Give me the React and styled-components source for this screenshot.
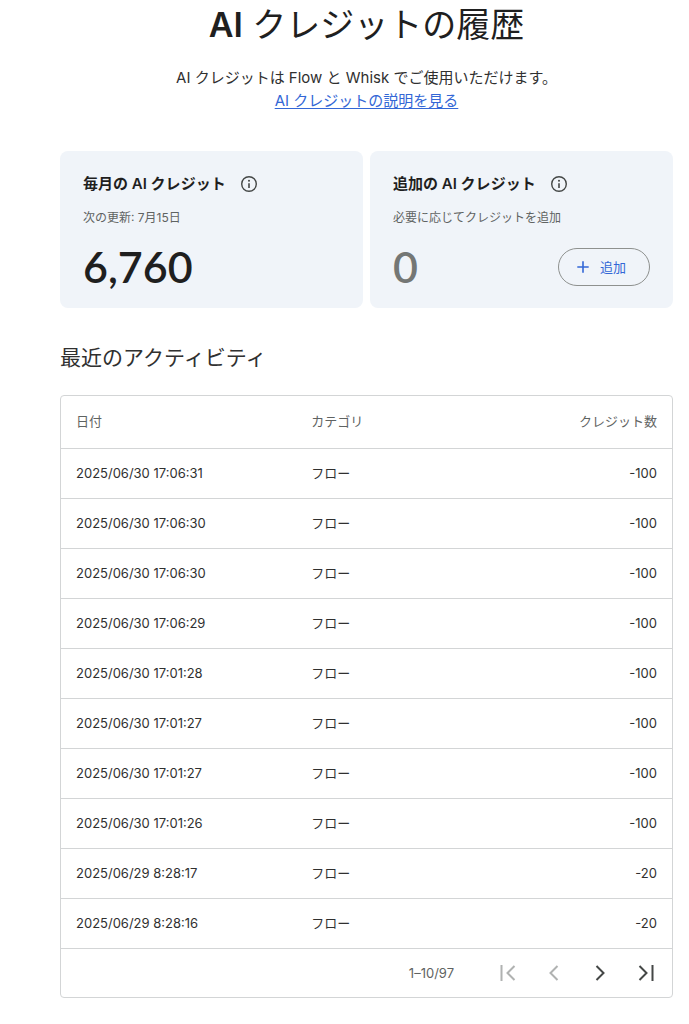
import React from "react";
import styled, { createGlobalStyle } from "styled-components";

const cjk = '"Noto Sans CJK JP", sans-serif';
const textFont = `Inter, ${cjk}`;
const numberFont = `Lato, ${cjk}`;

const GlobalStyle = createGlobalStyle`
  *, *::before, *::after { box-sizing: border-box; }
  body {
    margin: 0;
    background: #fff;
    color: #1f1f1f;
    font-family: ${textFont};
  }
`;

const Page = styled.main`
  padding: 0 16px 24px 60px;
`;

const Header = styled.header`
  display: flex;
  flex-direction: column;
  align-items: center;
  text-align: center;
`;

const Title = styled.h1`
  margin: 0 0 16px;
  font-size: 34px;
  line-height: 50px;
  font-weight: 400;
`;

const Latin = styled.span`
  font-weight: 600;
`;

const Intro = styled.p`
  margin: 0;
  font-size: 15px;
  line-height: 23px;
  color: #303030;
`;

const Link = styled.a`
  color: #3367d6;
  font-size: 15px;
  line-height: 23px;
  text-decoration: underline;
  text-underline-offset: 2px;
`;

const Cards = styled.section`
  display: grid;
  grid-template-columns: 1fr 1fr;
  gap: 7px;
  margin-top: 39px;
`;

const Card = styled.article`
  padding: 21px 23px;
  border-radius: 8px;
  background: #f0f4f9;
`;

const CardHeading = styled.div`
  display: flex;
  align-items: center;
  gap: 14px;
`;

const CardTitle = styled.h2`
  margin: 0;
  font-size: 15px;
  line-height: 24px;
  font-weight: 600;
`;

const InfoButton = styled.button`
  display: flex;
  padding: 0;
  border: 0;
  background: none;
  color: #444746;
  cursor: pointer;
`;

const CardNote = styled.p`
  margin: 12px 0 0;
  font-size: 12px;
  line-height: 20px;
  color: #5f6362;
`;

const CardFooter = styled.div`
  display: flex;
  align-items: center;
  justify-content: space-between;
  height: 40px;
  margin-top: 19px;
`;

const Amount = styled.span`
  font-family: ${numberFont};
  font-size: 43px;
  line-height: 40px;
  font-weight: 600;
  color: ${(p) => (p.$muted ? "#747775" : "#1f1f1f")};
`;

const AddButton = styled.button`
  display: flex;
  align-items: center;
  justify-content: center;
  gap: 11px;
  width: 92px;
  height: 38px;
  padding: 0 5px 0 0;
  border: 1px solid #8e918f;
  border-radius: 19px;
  background: transparent;
  color: #3367d6;
  font-family: ${textFont};
  font-size: 13px;
  line-height: 20px;
  cursor: pointer;
`;

const SectionTitle = styled.h2`
  margin: 34px 0 21px;
  font-size: 21px;
  line-height: 32px;
  font-weight: 400;
  color: #303030;
`;

const TableFrame = styled.div`
  border: 1px solid #d3d5d6;
  border-radius: 4px;
`;

const Table = styled.table`
  width: 100%;
  table-layout: fixed;
  border-collapse: separate;
  border-spacing: 0;
  font-size: 13px;
  line-height: 20px;
`;

const HeadCell = styled.th`
  width: ${(p) => p.$width};
  height: 53px;
  padding: 0 15px 2px;
  border-bottom: 1px solid #d3d5d6;
  color: #5f6362;
  font-weight: 400;
  text-align: ${(p) => (p.$end ? "right" : "left")};
`;

const Cell = styled.td`
  height: 50px;
  padding: 0 15px 2px;
  border-bottom: 1px solid #d3d5d6;
  color: #303030;
  text-align: ${(p) => (p.$end ? "right" : "left")};
`;

const Pagination = styled.nav`
  display: flex;
  align-items: center;
  justify-content: flex-end;
  height: 48px;
  padding-right: 3px;
`;

const Range = styled.span`
  margin-right: 31px;
  font-size: 13px;
  line-height: 20px;
  color: #5f6362;
`;

const PageButton = styled.button`
  display: flex;
  align-items: center;
  justify-content: center;
  width: 46px;
  height: 46px;
  padding: 0;
  border: 0;
  background: none;
  color: #444746;
  cursor: pointer;

  &:disabled {
    color: #b0b2b1;
    cursor: default;
  }
`;

const InfoIcon = () => (
  <svg width="18" height="18" viewBox="0 0 18 18" fill="none" aria-hidden="true">
    <circle cx="9" cy="9" r="7.3" stroke="currentColor" strokeWidth="1.4" />
    <path d="M9 8.2V13" stroke="currentColor" strokeWidth="1.6" />
    <circle cx="9" cy="5.8" r="1" fill="currentColor" />
  </svg>
);

const PlusIcon = () => (
  <svg width="12" height="12" viewBox="0 0 12 12" fill="none" aria-hidden="true">
    <path d="M6 0.3V11.7M0.3 6H11.7" stroke="currentColor" strokeWidth="1.6" />
  </svg>
);

const PageIcon = ({ d }) => (
  <svg width="24" height="24" viewBox="0 0 24 24" fill="none" aria-hidden="true">
    <path d={d} stroke="currentColor" strokeWidth="2" />
  </svg>
);

const pages = [
  { label: "最初のページ", d: "M5.5 4V20M18.5 5L11.5 12L18.5 19", disabled: true },
  { label: "前のページ", d: "M15.5 5L8.5 12L15.5 19", disabled: true },
  { label: "次のページ", d: "M8.5 5L15.5 12L8.5 19" },
  { label: "最後のページ", d: "M5.5 5L12.5 12L5.5 19M18.5 4V20" },
];

const rows = [
  ["2025/06/30 17:06:31", "-100"],
  ["2025/06/30 17:06:30", "-100"],
  ["2025/06/30 17:06:30", "-100"],
  ["2025/06/30 17:06:29", "-100"],
  ["2025/06/30 17:01:28", "-100"],
  ["2025/06/30 17:01:27", "-100"],
  ["2025/06/30 17:01:27", "-100"],
  ["2025/06/30 17:01:26", "-100"],
  ["2025/06/29 8:28:17", "-20"],
  ["2025/06/29 8:28:16", "-20"],
];

export default function App() {
  return (
    <Page lang="ja">
      <GlobalStyle />
      <Header>
        <Title>
          <Latin>AI</Latin> クレジットの履歴
        </Title>
        <Intro>AI クレジットは Flow と Whisk でご使用いただけます。</Intro>
        <Link href="#about">AI クレジットの説明を見る</Link>
      </Header>

      <Cards>
        <Card>
          <CardHeading>
            <CardTitle>毎月の AI クレジット</CardTitle>
            <InfoButton aria-label="詳細">
              <InfoIcon />
            </InfoButton>
          </CardHeading>
          <CardNote>次の更新: 7月15日</CardNote>
          <CardFooter>
            <Amount>6,760</Amount>
          </CardFooter>
        </Card>
        <Card>
          <CardHeading>
            <CardTitle>追加の AI クレジット</CardTitle>
            <InfoButton aria-label="詳細">
              <InfoIcon />
            </InfoButton>
          </CardHeading>
          <CardNote>必要に応じてクレジットを追加</CardNote>
          <CardFooter>
            <Amount $muted>0</Amount>
            <AddButton>
              <PlusIcon />
              追加
            </AddButton>
          </CardFooter>
        </Card>
      </Cards>

      <SectionTitle>最近のアクティビティ</SectionTitle>
      <TableFrame>
        <Table>
          <thead>
            <tr>
              <HeadCell $width="38.5%">日付</HeadCell>
              <HeadCell>カテゴリ</HeadCell>
              <HeadCell $end>クレジット数</HeadCell>
            </tr>
          </thead>
          <tbody>
            {rows.map(([date, credits], i) => (
              <tr key={i}>
                <Cell>{date}</Cell>
                <Cell>フロー</Cell>
                <Cell $end>{credits}</Cell>
              </tr>
            ))}
          </tbody>
        </Table>
        <Pagination aria-label="ページ">
          <Range>1–10/97</Range>
          {pages.map((page) => (
            <PageButton key={page.label} aria-label={page.label} disabled={page.disabled}>
              <PageIcon d={page.d} />
            </PageButton>
          ))}
        </Pagination>
      </TableFrame>
    </Page>
  );
}
